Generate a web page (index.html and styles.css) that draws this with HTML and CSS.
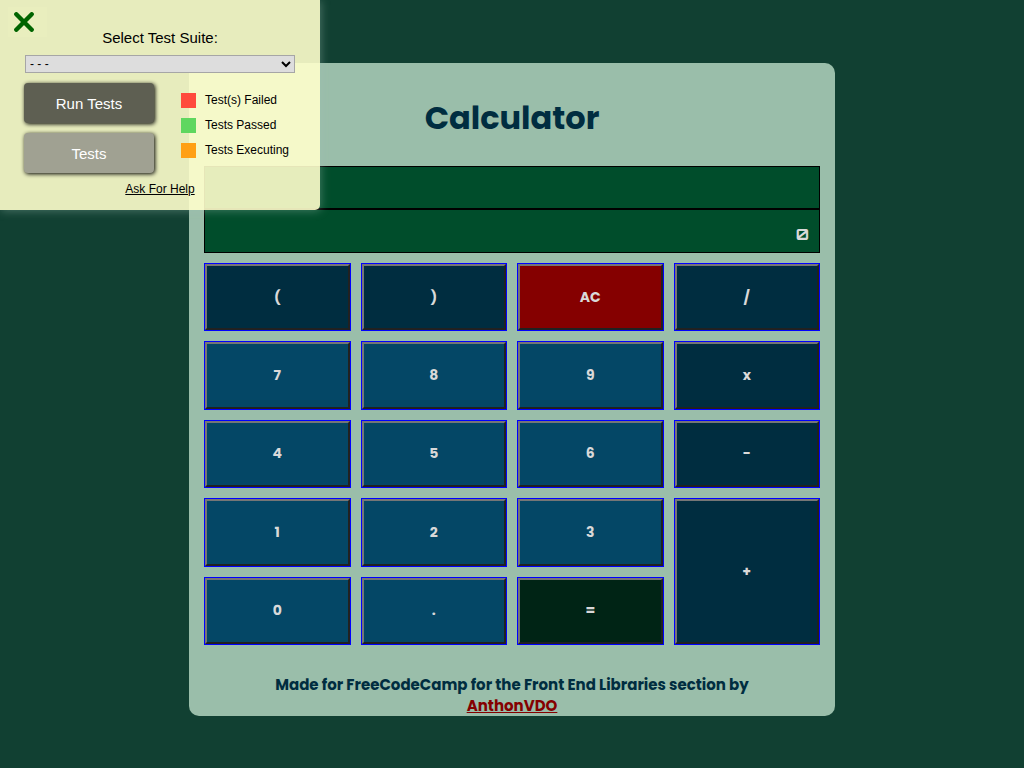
FILE: index.html
```html
<!DOCTYPE html>
<html lang="en">
<head>
<meta charset="utf-8">
<title>Calculator</title>
<meta name="viewport" content="width=device-width, initial-scale=1">
<link rel="stylesheet" href="styles.css">
</head>
<body>
<main class="calculator">
  <h1 class="title">Calculator</h1>
  <div class="display">
    <div class="formula"></div>
    <output class="result">0</output>
  </div>
  <div class="keys">
    <button class="key dark">(</button>
    <button class="key dark">)</button>
    <button class="key clear">AC</button>
    <button class="key dark">/</button>
    <button class="key">7</button>
    <button class="key">8</button>
    <button class="key">9</button>
    <button class="key dark">x</button>
    <button class="key">4</button>
    <button class="key">5</button>
    <button class="key">6</button>
    <button class="key dark">-</button>
    <button class="key">1</button>
    <button class="key">2</button>
    <button class="key">3</button>
    <button class="key dark plus">+</button>
    <button class="key">0</button>
    <button class="key">.</button>
    <button class="key equals">=</button>
  </div>
  <footer class="credit">Made for FreeCodeCamp for the Front End Libraries section by<br><a class="author" href="#">AnthonVDO</a></footer>
</main>
<aside class="tests">
  <button class="close" aria-label="Close test panel">
    <svg width="20" height="20" viewBox="0 0 20 20" aria-hidden="true"><path d="M2.3 2.3 17.7 17.7M17.7 2.3 2.3 17.7" fill="none" stroke="#006400" stroke-width="4.4" stroke-linecap="round"/></svg>
  </button>
  <label class="suite-label" for="suite">Select Test Suite:</label>
  <select class="suite" id="suite"><option>- - -</option></select>
  <div class="panel-row">
    <div class="actions">
      <button class="action run">Run Tests</button>
      <button class="action">Tests</button>
    </div>
    <ul class="legend">
      <li class="legend-item"><span class="swatch failed"></span>Test(s) Failed</li>
      <li class="legend-item"><span class="swatch passed"></span>Tests Passed</li>
      <li class="legend-item"><span class="swatch executing"></span>Tests Executing</li>
    </ul>
  </div>
  <a class="help" href="#">Ask For Help</a>
</aside>
</body>
</html>
```
FILE: styles.css
```css
* { box-sizing: border-box; }
body {
  margin: 0;
  min-height: 100vh;
  padding: 63px 16px 53px;
  background: #114032;
  font-family: Poppins, Inter, sans-serif;
  font-weight: 700;
  color: #002d40;
}
.calculator {
  max-width: 646px;
  margin: 0 auto;
  padding: 31px 15px 0;
  background: #9abeaa;
  border-radius: 10px;
}
.title {
  margin: 0 0 24px;
  font-size: 32px;
  line-height: 48px;
  text-align: center;
}
.display { margin-bottom: 11px; color: #d9d9d9; }
.formula, .result {
  display: block;
  height: 43px;
  padding: 0 10px;
  border: 1px solid #000;
  background: #004d2b;
}
.result {
  height: 44px;
  font: 700 16px/48px Orbitron, Inter, sans-serif;
  text-align: right;
}
.keys {
  display: grid;
  grid-template-columns: repeat(4, 1fr);
  grid-template-rows: repeat(5, 1fr);
  gap: 12px;
  min-height: 380px;
  margin: 0 1px;
}
.key {
  border: 2px solid;
  border-color: #767676 #212121 #212121 #767676;
  outline: 1px solid #00f;
  background: #044766;
  color: #d9d9d9;
  font: inherit;
  font-size: 14px;
  padding: 0;
}
.dark { background: #002d40; }
.clear { background: #850000; }
.equals { background: #002415; }
.plus { grid-row: span 2; }
.credit {
  padding-top: 30px;
  margin-bottom: -1px;
  font-size: 15px;
  line-height: 21px;
  text-align: center;
}
.author { color: #850000; }
.tests {
  position: absolute;
  top: 0;
  left: 0;
  width: 320px;
  display: flex;
  flex-direction: column;
  padding-bottom: 13px;
  background: rgba(255, 255, 204, 0.9);
  border-radius: 0 0 5px 0;
  box-shadow: 1px 1px 10px rgba(160, 190, 180, 0.4);
  font: 400 12px/15px "Liberation Sans", Arial, sans-serif;
  color: #000;
}
.close {
  position: absolute;
  top: 7px;
  left: 8px;
  width: 39px;
  height: 30px;
  padding: 0 7px 0 0;
  border: 0;
  background: rgba(255, 255, 204, 0.1);
}
.close svg { vertical-align: middle; }
.suite-label {
  padding-top: 28px;
  font-size: 15px;
  line-height: 20px;
  text-align: center;
}
.suite {
  height: 18px;
  margin: 7px 25px 10px;
  border: 1px solid #a6a6a6;
  background: #ddd;
  color: #000;
  font: 12px "Liberation Sans", Arial, sans-serif;
}
.panel-row { display: flex; gap: 27px; padding-left: 24px; }
.actions { display: grid; gap: 10px; width: 130px; }
.action {
  height: 40px;
  border: 0;
  border-radius: 4px;
  background: #a0a192;
  box-shadow: 1px 1px 4px #000;
  color: #fff;
  font: 15px "Liberation Sans", Arial, sans-serif;
}
.run { background: #5e5f52; }
.legend {
  display: flex;
  flex-direction: column;
  gap: 10px;
  margin: 0;
  padding: 10px 0 0;
  list-style: none;
}
.legend-item { display: flex; gap: 9px; }
.swatch { width: 15px; height: 15px; }
.failed { background: #ff4a3d; }
.passed { background: #5fd75f; }
.executing { background: #ffa015; }
.help { align-self: center; margin-top: 9px; color: #000; }
```
